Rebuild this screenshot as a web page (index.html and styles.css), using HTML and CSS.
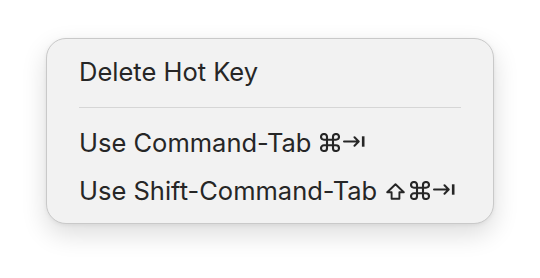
FILE: index.html
```html
<!DOCTYPE html>
<html>
<head>
<meta charset="utf-8">
<link rel="stylesheet" href="styles.css">
</head>
<body>
<div class="menu">
  <div class="item">Delete Hot Key</div>
  <div class="sep"></div>
  <div class="item">Use Command-Tab<span class="keys"><svg class="cmd" viewBox="2 2 20 20" width="20" height="19" preserveAspectRatio="none"><path d="M15 6v12a3 3 0 1 0 3-3H6a3 3 0 1 0 3 3V6a3 3 0 1 0-3 3h12a3 3 0 1 0-3-3" fill="none" stroke="#262626" stroke-width="2.1" stroke-linecap="round" stroke-linejoin="round"/></svg><svg class="tab" viewBox="0 0 22 11" width="22" height="11"><path d="M1 5.5H15.5M11.5 1.3L15.7 5.5L11.5 9.7" fill="none" stroke="#262626" stroke-width="2" stroke-linecap="round" stroke-linejoin="round"/><path d="M20.2 0.3V10.7" stroke="#262626" stroke-width="2.6"/></svg></span></div>
  <div class="item">Use Shift-Command-Tab<span class="keys"><svg class="shift" viewBox="0 0 19 17" width="19" height="17"><path d="M9.5 1.2L17.8 9.3H13.4V15.8H5.6V9.3H1.2Z" fill="none" stroke="#262626" stroke-width="1.9" stroke-linejoin="round"/></svg><svg class="cmd" viewBox="2 2 20 20" width="20" height="19" preserveAspectRatio="none"><path d="M15 6v12a3 3 0 1 0 3-3H6a3 3 0 1 0 3 3V6a3 3 0 1 0-3 3h12a3 3 0 1 0-3-3" fill="none" stroke="#262626" stroke-width="2.1" stroke-linecap="round" stroke-linejoin="round"/></svg><svg class="tab" viewBox="0 0 22 11" width="22" height="11"><path d="M1 5.5H15.5M11.5 1.3L15.7 5.5L11.5 9.7" fill="none" stroke="#262626" stroke-width="2" stroke-linecap="round" stroke-linejoin="round"/><path d="M20.2 0.3V10.7" stroke="#262626" stroke-width="2.6"/></svg></span></div>
</div>
</body>
</html>
```
FILE: styles.css
```css
html, body {
  margin: 0;
  padding: 0;
  background: #ffffff;
}
body {
  width: 540px;
  height: 278px;
  overflow: hidden;
}
.menu {
  box-sizing: border-box;
  margin: 38px 0 0 46px;
  width: 448px;
  height: 186px;
  background: #f2f2f2;
  border: 1px solid #c9c9c9;
  border-radius: 20px;
  box-shadow: 0 10px 26px rgba(0, 0, 0, 0.14), 0 1px 4px rgba(0, 0, 0, 0.06);
  padding: 9px 32px 0 32px;
  font-family: Inter, "Noto Sans", sans-serif;
  font-size: 25.5px;
  color: #262626;
}
.item {
  height: 48px;
  line-height: 48px;
  white-space: nowrap;
}
.sep {
  height: 1px;
  background: #d6d6d6;
  margin: 11px 0 11px 0;
}
.keys {
  margin-left: 9px;
}
.keys svg {
  display: inline-block;
}
.cmd {
  vertical-align: 0px;
}
.shift {
  vertical-align: 0px;
  margin-right: 5px;
}
.tab {
  vertical-align: 5px;
  margin-left: 3px;
}
```
